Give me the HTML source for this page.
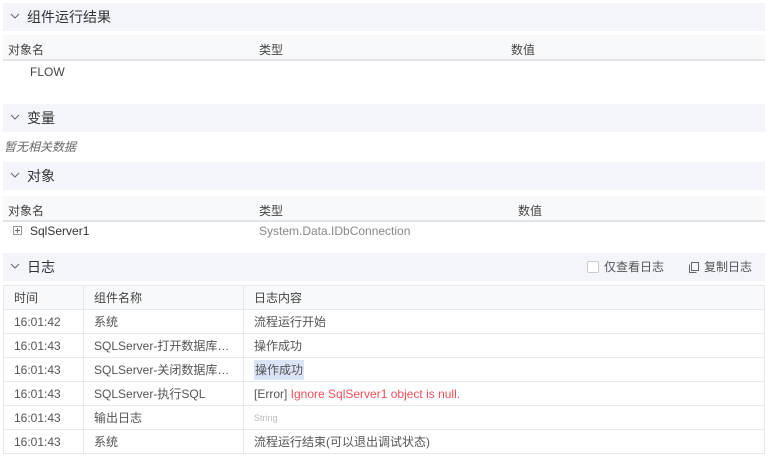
<!DOCTYPE html>
<html><head><meta charset="utf-8"><style>
*{margin:0;padding:0;box-sizing:border-box}
body{width:768px;height:457px;background:#fff;font-family:"Liberation Sans","Noto Sans CJK SC",sans-serif;font-size:12px;color:#444;position:relative;overflow:hidden}
.a{position:absolute;white-space:nowrap}
.hd{position:absolute;left:3px;width:762px;height:28px;background:#f3f5fa;font-size:14px;color:#333;line-height:28px;padding-left:24px}
.hd svg{position:absolute;left:7px;top:10px}
.th{position:absolute;left:3px;width:762px;height:26px;background:#f8f9fa;border-bottom:2px solid #e2e4e8}
table{position:absolute;left:3px;top:285px;width:762px;border-collapse:collapse;table-layout:fixed}
td{height:24px;border:1px solid #e6e8ec;padding-left:10px;font-size:12px;color:#555;white-space:nowrap;overflow:hidden}
tr:first-child td{background:#f8f9fa;color:#444}
</style></head><body>
<div class="hd" style="top:3px"><svg width="10" height="6"><path d="M1 1l4 4 4-4" fill="none" stroke="#666"/></svg>组件运行结果</div>
<div class="th" style="top:35px"></div>
<div class="a" style="left:8px;top:41px">对象名</div><div class="a" style="left:259px;top:41px">类型</div><div class="a" style="left:511px;top:41px">数值</div>
<div class="a" style="left:30px;top:65px">FLOW</div>
<div class="hd" style="top:104px"><svg width="10" height="6"><path d="M1 1l4 4 4-4" fill="none" stroke="#666"/></svg>变量</div>
<div class="a" style="left:4px;top:138px;font-style:italic;color:#666">暂无相关数据</div>
<div class="hd" style="top:162px"><svg width="10" height="6"><path d="M1 1l4 4 4-4" fill="none" stroke="#666"/></svg>对象</div>
<div class="th" style="top:196px"></div>
<div class="a" style="left:8px;top:202px">对象名</div><div class="a" style="left:259px;top:202px">类型</div><div class="a" style="left:518px;top:202px">数值</div>
<svg class="a" style="left:13px;top:226px" width="9" height="9"><rect x=".5" y=".5" width="8" height="8" fill="none" stroke="#999"/><path d="M2 4.5h5M4.5 2v5" stroke="#666"/></svg>
<div class="a" style="left:30px;top:224px;color:#333">SqlServer1</div>
<div class="a" style="left:259px;top:224px;color:#888">System.Data.IDbConnection</div>
<div class="hd" style="top:253px"><svg width="10" height="6"><path d="M1 1l4 4 4-4" fill="none" stroke="#666"/></svg>日志
<span style="position:absolute;left:584px;top:8px;width:12px;height:12px;border:1px solid #ccc;border-radius:2px;background:#fff"></span>
<span style="position:absolute;left:601px;font-size:12px;color:#555">仅查看日志</span>
<svg style="position:absolute;left:686px;top:9px" width="10" height="11"><rect x="2.5" y=".5" width="7" height="8" fill="none" stroke="#666"/><path d="M.5 2.5v8h7" fill="none" stroke="#666"/></svg>
<span style="position:absolute;left:701px;font-size:12px;color:#555">复制日志</span></div>
<table>
<colgroup><col style="width:80px"><col style="width:160px"><col></colgroup>
<tr><td>时间</td><td>组件名称</td><td>日志内容</td></tr>
<tr><td>16:01:42</td><td>系统</td><td>流程运行开始</td></tr>
<tr><td>16:01:43</td><td>SQLServer-打开数据库…</td><td>操作成功</td></tr>
<tr><td>16:01:43</td><td>SQLServer-关闭数据库…</td><td><span style="background:#d9e4f7;padding:3px 1px">操作成功</span></td></tr>
<tr><td>16:01:43</td><td>SQLServer-执行SQL</td><td>[Error] <span style="color:#f0505a">Ignore SqlServer1 object is null.</span></td></tr>
<tr><td>16:01:43</td><td>输出日志</td><td style="font-size:9px;color:#bbb">String</td></tr>
<tr><td>16:01:43</td><td>系统</td><td>流程运行结束(可以退出调试状态)</td></tr>
</table>
</body></html>
